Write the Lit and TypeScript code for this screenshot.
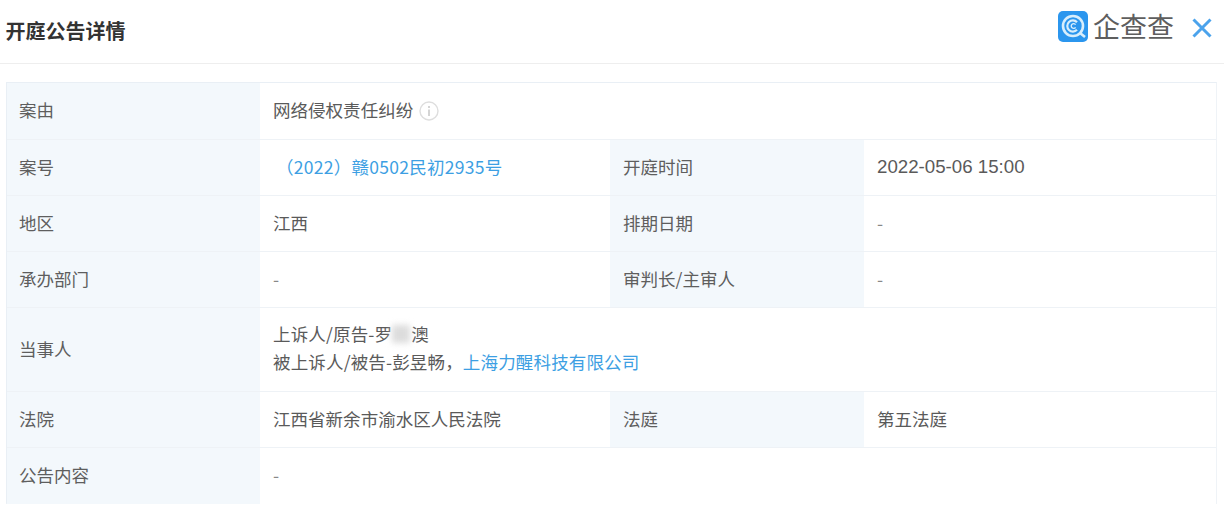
import { LitElement, html, css } from "lit";
import { customElement } from "lit/decorators.js";

@customElement("app-root")
export class AppRoot extends LitElement {
  static styles = css`
    :host {
      display: block;
      width: 1224px;
      height: 526px;
      background: #fff;
      overflow: hidden;
      font-family: "Noto Sans CJK SC", "Liberation Sans", sans-serif;
      color: #555;
      font-size: 17.55px;
    }
    .header {
      height: 63px;
      box-sizing: content-box;
      border-bottom: 1px solid #eeeeee;
      display: flex;
      align-items: center;
      justify-content: space-between;
      padding: 0 12px 0 5.5px;
    }
    .title {
      font-size: 20px;
      font-weight: 700;
      color: #333;
      line-height: 1;
      margin-top: -2px;
    }
    .brand {
      display: flex;
      align-items: center;
      margin-top: -10px;
    }
    .logo-mark { display: block; margin-right: 5px; }
    .logo-text {
      font-size: 27px;
      font-weight: 400;
      color: #5e5e5e;
      line-height: 1;
      margin-top: -2px;
      margin-right: 18px;
    }
    .close { display: block; margin-top: 2px; }
    .table {
      margin: 18px 6px 0 6px;
      display: grid;
      grid-template-columns: 253px 350px 254px 1fr;
      grid-template-rows: 57px 56px 56px 56px 84px 56px 56px;
      border-right: 1px solid #eff3f7;
      border-bottom: 1px solid #eff3f7;
      border-top: 1px solid #e9eff5;
      border-left: 1px solid #e9eff5;
      box-sizing: border-box;
      width: 1211px;
      height: 422px;
    }
    .cell {
      display: flex;
      align-items: center;
      padding: 0 13px 2px;
      border-bottom: 1px solid #eef2f6;
      box-sizing: border-box;
      line-height: 28px;
      min-width: 0;
      white-space: nowrap;
    }
    .cell.last { border-bottom: 0; }
    .label { background: #f3f8fc; color: #5e5e5e; }
    .label.first { padding-left: 12px; }
    .value { background: #fff; color: #5a5a5a; }
    .empty { color: #888; }
    .wide { grid-column: span 3; }
    .link { color: #3d9fe3; }
    .case-no { padding-left: 16px; letter-spacing: 0.25px; }
    .stack { display: block; padding-top: 12px; padding-bottom: 0; }
    .line { display: block; height: 28px; letter-spacing: 0.13px; }
    .masked {
      display: inline-block;
      width: 18px;
      height: 18px;
      background: #dcdcdc;
      filter: blur(3px);
      vertical-align: -2px;
      margin-right: 1px;
    }
    .info { margin-left: 6px; display: block; margin-top: 2px; }
    .time { font-family: "Liberation Sans", sans-serif; font-size: 18.7px; }
  `;

  render() {
    return html`
      <div class="header">
        <div class="title">开庭公告详情</div>
        <div class="brand">
          <svg class="logo-mark" width="30" height="31" viewBox="0 0 30 31">
            <rect x="0" y="0" width="30" height="31" rx="5" fill="#2b96ee"></rect>
            <circle cx="15" cy="15" r="10" fill="none" stroke="#d8eefc" stroke-width="2.6"></circle>
            <path d="M19 11.2a5.6 5.6 0 1 0 0 7.6" fill="none" stroke="#d8eefc" stroke-width="2.2"></path>
            <path d="M17.6 13.6a2.4 2.4 0 1 0 0 2.8" fill="none" stroke="#d8eefc" stroke-width="1.4"></path>
            <path d="M22 22l5 4" stroke="#d8eefc" stroke-width="2.6"></path>
          </svg>
          <span class="logo-text">企查查</span>
          <svg class="close" width="20" height="20" viewBox="0 0 20 20">
            <path d="M1.5 1.5L18.5 18.5M18.5 1.5L1.5 18.5" stroke="#4ba3ec" stroke-width="3" fill="none"></path>
          </svg>
        </div>
      </div>
      <div class="table">
        <div class="cell label first">案由</div>
        <div class="cell value wide">
          网络侵权责任纠纷
          <svg class="info" width="20" height="20" viewBox="0 0 20 20">
            <circle cx="10" cy="10" r="9" fill="none" stroke="#dedede" stroke-width="1.4"></circle>
            <rect x="9.1" y="8.5" width="1.8" height="6.5" fill="#d0d0d0"></rect>
            <rect x="9.1" y="5" width="1.8" height="2" fill="#d0d0d0"></rect>
          </svg>
        </div>

        <div class="cell label first">案号</div>
        <div class="cell value link case-no">（2022）赣0502民初2935号</div>
        <div class="cell label">开庭时间</div>
        <div class="cell value time">2022-05-06 15:00</div>

        <div class="cell label first">地区</div>
        <div class="cell value">江西</div>
        <div class="cell label">排期日期</div>
        <div class="cell value empty">-</div>

        <div class="cell label first">承办部门</div>
        <div class="cell value empty">-</div>
        <div class="cell label">审判长/主审人</div>
        <div class="cell value empty">-</div>

        <div class="cell label first">当事人</div>
        <div class="cell value wide stack">
          <span class="line">上诉人/原告-罗<span class="masked"></span>澳</span>
          <span class="line">被上诉人/被告-彭昱畅，<span class="link">上海力醒科技有限公司</span></span>
        </div>

        <div class="cell label first">法院</div>
        <div class="cell value">江西省新余市渝水区人民法院</div>
        <div class="cell label">法庭</div>
        <div class="cell value">第五法庭</div>

        <div class="cell label first last">公告内容</div>
        <div class="cell value wide last empty">-</div>
      </div>
    `;
  }
}
